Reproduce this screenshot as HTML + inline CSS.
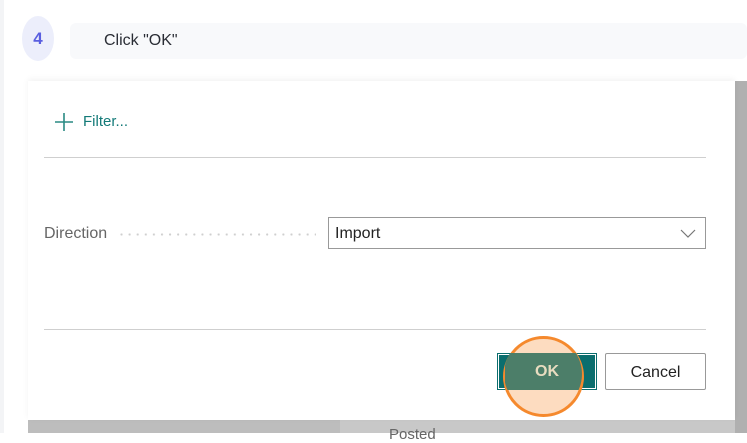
<!DOCTYPE html>
<html><head><style>
*{margin:0;padding:0;box-sizing:border-box}
body{width:747px;height:433px;overflow:hidden;background:#fff;font-family:"Liberation Sans",sans-serif;position:relative}
.abs{position:absolute}
</style></head><body>
<div class="abs" style="left:0;top:0;width:4px;height:433px;background:#f3f4f6"></div>
<div class="abs" style="left:22px;top:16px;width:32px;height:45px;border-radius:50%;background:#eceefb;color:#5a5fe0;font-weight:bold;font-size:17px;line-height:45px;text-align:center">4</div>
<div class="abs" style="left:70px;top:23px;width:677px;height:36px;border-radius:6px;background:#f8f9fb;color:#2a2d35;font-size:16px;line-height:36px;padding-left:34px">Click "OK"</div>
<div class="abs" style="left:28px;top:420px;width:719px;height:13px;background:#bdbdbd"></div>
<div class="abs" style="left:340px;top:420px;width:407px;height:13px;background:#c8c8c8"></div>
<div class="abs" style="left:389px;top:426px;font-size:15px;color:#666">Posted</div>
<div class="abs" style="left:735px;top:81px;width:12px;height:352px;background:#b0b0b0"></div>
<div class="abs" style="left:28px;top:81px;width:707px;height:339px;background:#fff;box-shadow:0 -2px 6px rgba(0,0,0,.05)"></div>
<svg class="abs" style="left:54px;top:112px" width="20" height="20"><path d="M10 1V19M1 10H19" stroke="#2a8a84" stroke-width="1.6"/></svg>
<div class="abs" style="left:83px;top:113px;font-size:15px;color:#137a78">Filter...</div>
<div class="abs" style="left:44px;top:157px;width:662px;height:1px;background:#cfcfcf"></div>
<div class="abs" style="left:44px;top:225px;font-size:16px;color:#666">Direction</div>
<div class="abs" style="left:120px;top:233px;width:196px;height:3px;background:radial-gradient(circle at 1.5px 1.5px,#cfcfcf 1px,transparent 1.2px) 0 0/8.1px 3px repeat-x"></div>
<div class="abs" style="left:328px;top:217px;width:378px;height:32px;border:1px solid #999;font-size:16px;color:#222;line-height:32px;padding-left:6px">Import</div>
<svg class="abs" style="left:680px;top:227px" width="16" height="12"><path d="M1 3L8 10L15 3" stroke="#777" stroke-width="1.2" fill="none"/></svg>
<div class="abs" style="left:44px;top:329px;width:662px;height:1px;background:#cfcfcf"></div>
<div class="abs" style="left:497px;top:353px;width:100px;height:37px;background:#0b6e6e;border:1px solid #0b6e6e;box-shadow:inset 0 0 0 1px #fff"></div>
<div class="abs" style="left:605px;top:353px;width:101px;height:37px;border:1px solid #999;border-radius:2px;font-size:16px;color:#222;line-height:37px;text-align:center">Cancel</div>
<div class="abs" style="left:503px;top:336px;width:81px;height:81px;border-radius:50%;border:3px solid #f5892d;background:rgba(252,196,150,.6);overflow:hidden"></div>
<div class="abs" style="left:505px;top:353px;width:77px;height:37px;background:#4c7e69;clip-path:circle(39px at 38px 21px)"></div>
<div class="abs" style="left:497px;top:353px;width:100px;height:37px;font-size:16px;font-weight:bold;color:#e8dcc0;line-height:37px;text-align:center">OK</div>
</body></html>
